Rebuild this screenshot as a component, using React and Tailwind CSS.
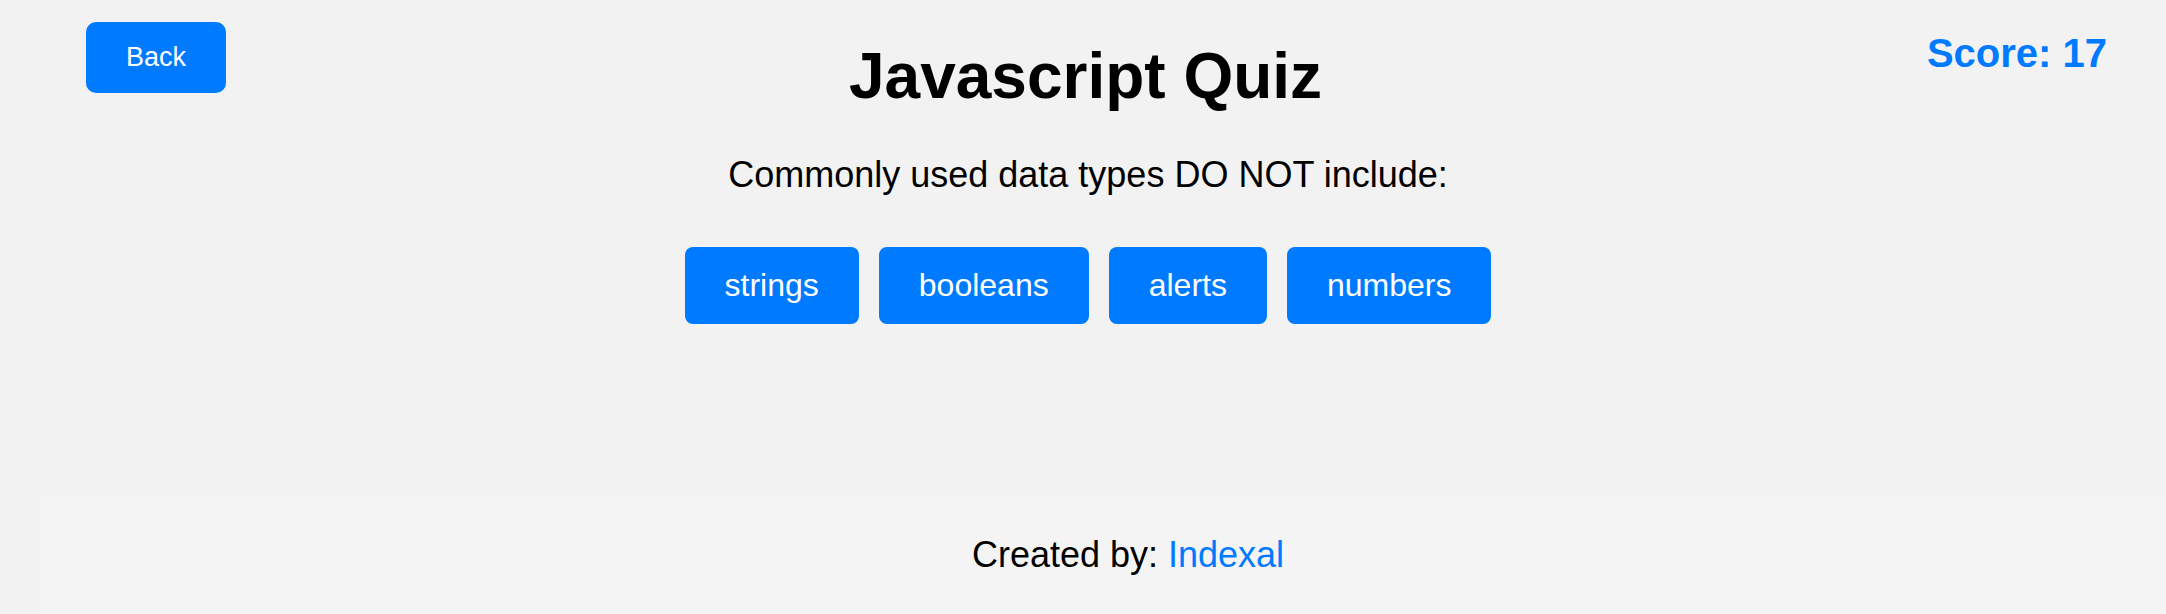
const ANSWERS = ['strings', 'booleans', 'alerts', 'numbers']

export default function App() {
  return (
    <div className="h-screen overflow-hidden bg-[#f2f2f2] text-black leading-[normal] font-['Liberation_Sans',Arial,sans-serif]">
      {/* Header */}
      <div className="grid grid-cols-[1fr_auto_1fr] items-start pl-[5px]">
        <div>
          <button className="ml-[81px] mt-[22px] px-10 py-5 rounded-[10px] bg-[#007bff] text-white text-[27px] leading-[normal]">
            Back
          </button>
        </div>
        <h1 className="mt-[39px] text-[64px] font-bold leading-[normal]">Javascript Quiz</h1>
        <div className="flex justify-end">
          <span className="mr-[59px] mt-[31px] text-[40px] font-bold text-[#007bff]">Score: 17</span>
        </div>
      </div>

      {/* Question */}
      <div className="flex flex-col items-center pl-[10px]">
        <p className="mt-[41px] text-[36px]">Commonly used data types DO NOT include:</p>
        <div className="mt-[51px] flex gap-5">
          {ANSWERS.map((a) => (
            <button key={a} className="px-10 py-5 rounded-lg bg-[#007bff] text-white text-[32px] leading-[normal]">
              {a}
            </button>
          ))}
        </div>
      </div>

      {/* Footer */}
      <footer className="mt-[171px] ml-[40px] w-full bg-[#f4f4f4] pt-[39px] pb-[40px] pl-[10px] text-center text-[36px]">
        Created by: <a className="text-[#007bff]">Indexal</a>
      </footer>
    </div>
  )
}
